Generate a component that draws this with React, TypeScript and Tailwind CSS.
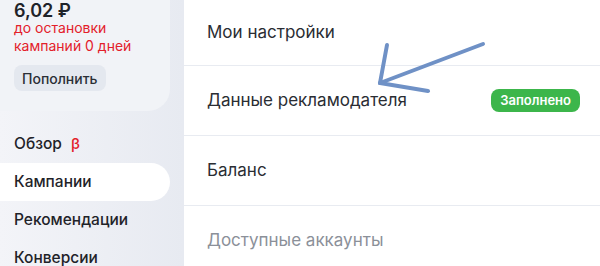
import React from "react"

const nav = [
  { label: "Обзор", beta: true },
  { label: "Кампании", active: true },
  { label: "Рекомендации" },
  { label: "Конверсии" },
]

const rows = [
  { label: "Мои настройки", h: "h-[66px]" },
  { label: "Данные рекламодателя", h: "h-[70px]", badge: "Заполнено" },
  { label: "Баланс", h: "h-[70px]" },
  { label: "Доступные аккаунты", h: "h-[70px]", muted: true },
]

function Arrow() {
  return (
    <svg className="absolute left-0 top-0 pointer-events-none" width="600" height="266" viewBox="0 0 600 266">
      <g stroke="#6f91c6" strokeWidth="4" strokeLinecap="round" fill="none">
        <path d="M483 44 L380 83" />
        <path d="M380 83 L387 45" />
        <path d="M380 83 L428 91" />
      </g>
    </svg>
  )
}

export default function App() {
  return (
    <div
      className="relative flex w-[600px] h-[266px] overflow-hidden bg-white"
      style={{ fontFamily: "Inter, 'Noto Sans', sans-serif" }}
    >
      {/* Sidebar */}
      <div className="w-[184px] shrink-0 bg-gradient-to-r from-[#f3f4f8] to-[#e7eaf1]">
        <div className="w-[170px] h-[111px] rounded-br-[22px] bg-[#f1f3f7] pl-[14px]">
          <div className="text-[18px] leading-[21px] font-semibold text-[#1f2329]">6,02 ₽</div>
          <div className="-mt-[2px] text-[14px] leading-[18px] text-[#e3202a]">
            до остановки
            <br />
            кампаний 0 дней
          </div>
          <button className="mt-[10px] h-[26px] px-[8px] rounded-[8px] bg-[#e4e8ef] text-[14px] font-medium text-[#2b2f36]">
            Пополнить
          </button>
        </div>
        <div className="mt-[14px] flex flex-col">
          {nav.map((item) => (
            <div
              key={item.label}
              className={`h-[38px] flex items-center pl-[14px] text-[15.5px] font-medium text-[#1f2329] ${
                item.active ? "w-[170px] rounded-r-[20px] bg-white" : ""
              }`}
            >
              {item.label}
              {item.beta && <span className="ml-[9px] text-[#e3202a] text-[15px]">β</span>}
            </div>
          ))}
        </div>
      </div>

      {/* Settings list */}
      <div className="flex-1 flex flex-col">
        {rows.map((row) => (
          <div
            key={row.label}
            className={`${row.h} shrink-0 flex items-center justify-between pl-[23px] pr-[20px] border-b border-[#e8ebf1]`}
          >
            <span className={`text-[17px] ${row.muted ? "text-[#8b9099]" : "text-[#2a2d33]"}`}>{row.label}</span>
            {row.badge && (
              <span className="h-[23px] px-[9px] flex items-center rounded-[8px] bg-[#3cb64b] text-white text-[13px] font-semibold">
                {row.badge}
              </span>
            )}
          </div>
        ))}
      </div>

      <Arrow />
    </div>
  )
}
